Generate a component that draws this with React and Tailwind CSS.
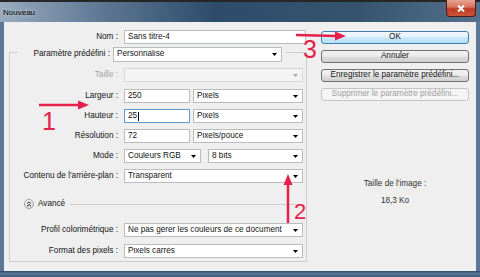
import React from "react";

const Tri = ({ gray }) => (
  <svg width="5" height="3" viewBox="0 0 5 3" className="shrink-0">
    <polygon points="0,0 5,0 2.5,3" fill={gray ? "#a8a8a8" : "#000"} />
  </svg>
);

function Select({ className, children, disabled }) {
  return (
    <div
      className={
        "flex items-center h-[14px] border pl-[3px] pr-[4px] " +
        (disabled ? "border-[#d6d6d6] bg-[#f4f4f4] " : "border-[#b9bcc1] bg-white ") +
        className
      }
    >
      <span className="flex-1 truncate leading-none">{children}</span>
      <Tri gray={disabled} />
    </div>
  );
}

function Input({ className, children, focused }) {
  return (
    <div
      className={
        "flex items-center h-[14px] border pl-[3px] bg-white " +
        (focused ? "border-[#5b9bd1] " : "border-[#b9bcc1] ") +
        className
      }
    >
      <span className="leading-none">{children}</span>
      {focused && <span className="w-[1px] h-[9px] bg-black ml-[1px]" />}
    </div>
  );
}

function Row({ label, children, className, disabled }) {
  return (
    <div className={"flex items-center " + className}>
      <div className={"w-[110px] text-right pr-[2px] leading-none " + (disabled ? "text-[#a3a3a3]" : "")}>{label}</div>
      <div className="flex items-center ml-[4px]">{children}</div>
    </div>
  );
}

function Button({ children, variant }) {
  const base = "h-[13px] w-full rounded-[3px] border flex items-center justify-center leading-none ";
  if (variant === "ok")
    return (
      <div className={base + "border-[#3c7fb1] bg-[linear-gradient(180deg,#f2f9fd_0%,#e1f1fb_45%,#c8e6f8_55%,#b9def5_100%)]"}>
        {children}
      </div>
    );
  if (variant === "disabled")
    return <div className={base + "border-[#c3c6c8] bg-[#f4f4f4] text-[#a0a0a0]"}>{children}</div>;
  return (
    <div className={base + "border-[#707070] bg-[linear-gradient(180deg,#f2f2f2_0%,#ebebeb_45%,#dddddd_55%,#cfcfcf_100%)]"}>
      {children}
    </div>
  );
}

export default function App() {
  return (
    <div className="relative w-[480px] h-[277px] overflow-hidden font-['Liberation_Sans',Arial,sans-serif] text-[8.2px] text-[#141414] bg-[#2a2a2a]">
      {/* title bar */}
      <div className="h-[22px] flex items-start border-t-2 border-[#262626] bg-[linear-gradient(90deg,#98aabd_0%,#5c7692_22%,#2f4b6a_45%,#36536f_75%,#55708d_100%)]">
        <div className="pl-[3px] pt-[7px] text-[8px] leading-none text-black [text-shadow:0_0_4px_#dfe8f0]">Nouveau</div>
        <div className="ml-auto mr-[4px] -mt-[2px] w-[30px] h-[17px] rounded-b-[4px] border border-t-0 border-[#4a1f18] bg-[linear-gradient(180deg,#e9a494_0%,#d7705a_45%,#bf3b22_55%,#c9553a_100%)] flex items-center justify-center">
          <svg width="8" height="7" viewBox="0 0 8 7">
            <path d="M1 0.5 L7 6.5 M7 0.5 L1 6.5" stroke="#fff" strokeWidth="2" />
          </svg>
        </div>
      </div>

      <div className="flex h-[249px]">
        <div className="w-[4px] bg-[#5d7895]" />
        <div className="flex-1 flex bg-[#efefef]">
          {/* left column */}
          <div className="ml-[5px] w-[298px] pt-[8px] flex flex-col">
            <div className="flex items-center">
              <div className="w-[111px] text-right pr-[2px] leading-none">Nom :</div>
              <Input className="ml-[4px] w-[182px]">Sans titre-4</Input>
            </div>

            <div className="mt-[8px] h-[210px] border border-[#cdcdcd] flex flex-col">
              <div className="-mt-[6px] ml-[7px] self-start flex items-center gap-[3px] bg-[#efefef] pr-[4px] h-[15px]">
                <div className="w-[93px] text-right leading-none">Paramètre prédéfini :</div>
                <Select className="w-[169px] h-[15px]">Personnalisé</Select>
              </div>

              <Row label="Taille :" className="mt-[6px]" disabled>
                <Select className="w-[179px]" disabled></Select>
              </Row>
              <Row label="Largeur :" className="mt-[7px]">
                <Input className="w-[66px]">250</Input>
                <Select className="ml-[3px] w-[110px]">Pixels</Select>
              </Row>
              <Row label="Hauteur :" className="mt-[6px]">
                <Input className="w-[66px]" focused>25</Input>
                <Select className="ml-[3px] w-[110px]">Pixels</Select>
              </Row>
              <Row label="Résolution :" className="mt-[6px]">
                <Input className="w-[66px]">72</Input>
                <Select className="ml-[3px] w-[110px]">Pixels/pouce</Select>
              </Row>
              <Row label="Mode :" className="mt-[6px]">
                <Select className="w-[77px]">Couleurs RGB</Select>
                <Select className="ml-[7px] w-[95px]">8 bits</Select>
              </Row>
              <Row label="Contenu de l'arrière-plan :" className="mt-[6px]">
                <Select className="w-[179px]">Transparent</Select>
              </Row>

              <div className="mt-[16px] h-[10px] ml-[14px] mr-[3px] flex items-center">
                <div className="w-[10px] h-[10px] rounded-full border border-[#9c9c9c] bg-[linear-gradient(180deg,#ffffff,#dcdcdc)] flex items-center justify-center">
                  <svg width="6" height="6" viewBox="0 0 6 6">
                    <path d="M1 2.5 L3 0.8 L5 2.5 M1 5.2 L3 3.5 L5 5.2" stroke="#222" strokeWidth="1" fill="none" />
                  </svg>
                </div>
                <span className="ml-[4px] leading-none">Avancé</span>
                <div className="ml-[5px] flex-1 h-[1px] bg-[#cdcdcd]" />
              </div>

              <Row label="Profil colorimétrique :" className="mt-[14px]">
                <Select className="w-[179px]">Ne pas gérer les couleurs de ce document</Select>
              </Row>
              <Row label="Format des pixels :" className="mt-[7px]">
                <Select className="w-[179px]">Pixels carrés</Select>
              </Row>
            </div>
          </div>

          {/* right column */}
          <div className="ml-[14px] w-[148px] pt-[9px] flex flex-col gap-[6px]">
            <Button variant="ok">OK</Button>
            <Button>Annuler</Button>
            <Button>Enregistrer le paramètre prédéfini...</Button>
            <Button variant="disabled">Supprimer le paramètre prédéfini...</Button>
            <div className="mt-[71px] text-center leading-[11px] text-[#333]">Taille de l'image :</div>
            <div className="mt-[0px] text-center leading-[11px] text-[#333]">18,3 Ko</div>
          </div>
        </div>
        <div className="w-[4px] bg-[#5d7895]" />
      </div>
      <div className="h-[6px] bg-[linear-gradient(180deg,#2f4763_0%,#5b7896_40%,#3e5a78_100%)]" />

      {/* red annotations overlay */}
      <svg className="absolute inset-0 pointer-events-none" width="480" height="277" viewBox="0 0 480 277">
        <g fill="#e5204a" stroke="#e5204a">
          <line x1="39" y1="105" x2="80" y2="105" strokeWidth="2.5" />
          <polygon points="78,100.5 89,105 78,109.5" stroke="none" />
          <line x1="288" y1="223" x2="288" y2="183" strokeWidth="2.5" />
          <polygon points="283.5,185 288,174 292.5,185" stroke="none" />
          <line x1="296" y1="35" x2="337" y2="36" strokeWidth="2.5" />
          <polygon points="335,31.5 346,36 335,40.5" stroke="none" />
        </g>
        <g fill="#e5204a" fontFamily="Liberation Sans, Arial, sans-serif">
          <text x="42" y="130" fontSize="25">1</text>
          <text x="294" y="219" fontSize="22">2</text>
          <text x="303" y="58" fontSize="25">3</text>
        </g>
      </svg>
    </div>
  );
}
